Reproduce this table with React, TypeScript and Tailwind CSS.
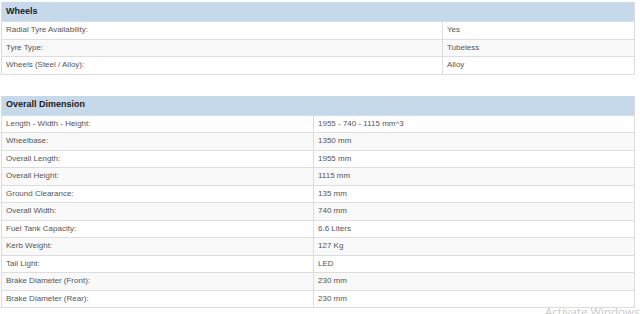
import React from "react";

type Row = [string, string];

const wheels: Row[] = [
  ["Radial Tyre Availability:", "Yes"],
  ["Tyre Type:", "Tubeless"],
  ["Wheels (Steel / Alloy):", "Alloy"],
];

const dims: Row[] = [
  ["Length - Width - Height:", "1955 - 740 - 1115 mm^3"],
  ["Wheelbase:", "1350 mm"],
  ["Overall Length:", "1955 mm"],
  ["Overall Height:", "1115 mm"],
  ["Ground Clearance:", "135 mm"],
  ["Overall Width:", "740 mm"],
  ["Fuel Tank Capacity:", "6.6 Liters"],
  ["Kerb Weight:", "127 Kg"],
  ["Tail Light:", "LED"],
  ["Brake Diameter (Front):", "230 mm"],
  ["Brake Diameter (Rear):", "230 mm"],
];

function Spec({ title, rows, labelW }: { title: string; rows: Row[]; labelW: string }) {
  return (
    <div className="w-[634px] border-x border-b border-[#dddddd]">
      <div className="h-[19px] bg-[#c6d9ea] flex items-center px-[4px] text-[9px] font-bold text-[#1a1a1a]">
        {title}
      </div>
      {rows.map(([k, v], i) => (
        <div
          key={k}
          className={`flex h-[17.5px] text-[8px] text-[#555555] border-t border-[#dddddd] ${i % 2 === 1 ? "bg-[#f9f9f9]" : "bg-white"}`}
        >
          <div className={`${labelW} shrink-0 flex items-center px-[4px] border-r border-[#dddddd]`}>{k}</div>
          <div className="flex-1 flex items-center px-[4px]">{v}</div>
        </div>
      ))}
    </div>
  );
}

export default function App() {
  return (
    <div
      className="relative w-[640px] h-[314px] overflow-hidden bg-white pt-[2px] pl-[1px]"
      style={{ fontFamily: '"Liberation Sans", Arial, sans-serif' }}
    >
      <Spec title="Wheels" rows={wheels} labelW="w-[441px]" />
      <div className="h-[21px]" />
      <Spec title="Overall Dimension" rows={dims} labelW="w-[312px]" />
      <div
        className="absolute left-[545px] top-[303px] whitespace-nowrap text-[11.5px] text-[#c8c8c8]"
        style={{ fontFamily: '"Open Sans", "Liberation Sans", sans-serif' }}
      >
        Activate Windows
      </div>
    </div>
  );
}
